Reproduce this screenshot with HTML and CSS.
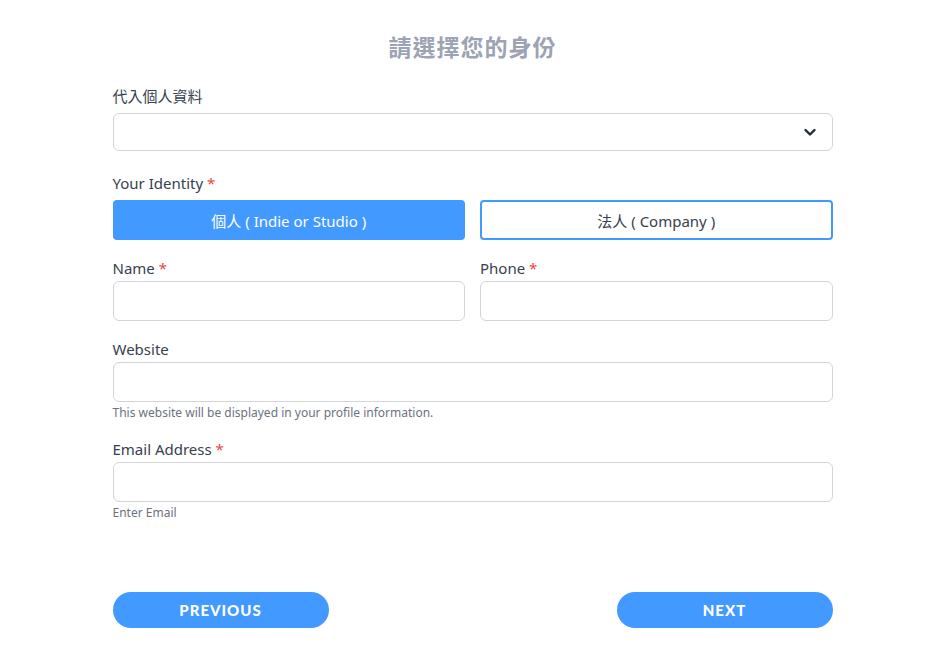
FILE: index.html
```html
<!DOCTYPE html>
<html lang="zh-Hant">
<head>
    <meta charset="UTF-8">
    <meta name="viewport" content="width=device-width, initial-scale=1.0">
    <title>請選擇您的身份</title>
    <link rel="stylesheet" href="styles.css">
</head>
<body>
    <div class="wizard">
        <h1 class="title">請選擇您的身份</h1>

        <label class="label label-select" for="profile">代入個人資料</label>
        <div class="select-wrap">
            <select id="profile" class="field select"></select>
            <svg class="chevron" width="14" height="14" viewBox="0 0 14 14">
                <path d="M2.5 5 L7 9.5 L11.5 5" fill="none" stroke="#1f2937" stroke-width="2.4" stroke-linecap="round" stroke-linejoin="round"/>
            </svg>
        </div>

        <div class="label label-select identity-label">Your Identity <span class="req">*</span></div>
        <div class="row">
            <button class="choice active">個人 ( Indie or Studio )</button>
            <button class="choice">法人 ( Company )</button>
        </div>

        <div class="row fields">
            <div class="col">
                <label class="label" for="name">Name <span class="req">*</span></label>
                <input id="name" class="field" type="text">
            </div>
            <div class="col">
                <label class="label" for="phone">Phone <span class="req">*</span></label>
                <input id="phone" class="field" type="text">
            </div>
        </div>

        <div class="group">
            <label class="label" for="website">Website</label>
            <input id="website" class="field" type="text">
            <div class="help">This website will be displayed in your profile information.</div>
        </div>

        <div class="group email">
            <label class="label" for="email">Email Address <span class="req">*</span></label>
            <input id="email" class="field" type="text">
            <div class="help">Enter Email</div>
        </div>

        <div class="actions">
            <button class="nav">PREVIOUS</button>
            <button class="nav">NEXT</button>
        </div>
    </div>
</body>
</html>
```

FILE: styles.css
```css
body {
    margin: 0;
    background: #ffffff;
    font-family: "Segoe UI", "Noto Sans", "Noto Sans CJK TC", sans-serif;
    color: #374151;
}
.wizard {
    width: 720px;
    margin: 0 auto;
    padding-top: 31px;
}
.title {
    margin: 0;
    text-align: center;
    font-size: 23px;
    line-height: 32px;
    font-weight: bold;
    color: #9ca3b4;
    letter-spacing: 1px;
}
.label {
    display: block;
    font-size: 15px;
    line-height: 20px;
    color: #374151;
    margin-bottom: 3px;
}
.label-select {
    margin-bottom: 6px;
}
.title + .label {
    margin-top: 23px;
}
.label-select + .select-wrap {
    margin-top: 7px;
}
.title + .label.label-select {
    margin-bottom: 0;
}
.identity-label {
    margin-top: 22px;
    margin-bottom: 7px;
}
.req {
    color: #ef4444;
}
.field {
    display: block;
    box-sizing: border-box;
    width: 100%;
    height: 40px;
    border: 1px solid #d1d5db;
    border-radius: 6px;
    background: #fff;
    font: inherit;
    outline: none;
}
.select-wrap {
    position: relative;
}
.select {
    height: 38px;
    appearance: none;
    -webkit-appearance: none;
}
.chevron {
    position: absolute;
    right: 16px;
    top: 12px;
}
.row {
    display: flex;
    gap: 15px;
}
.choice {
    flex: 1;
    height: 40px;
    border: 2px solid #4299ff;
    border-radius: 4px;
    background: #fff;
    color: #374151;
    font-family: inherit;
    font-size: 15px;
}
.choice.active {
    background: #4299ff;
    color: #fff;
}
.fields {
    margin-top: 18px;
}
.col {
    flex: 1;
}
.group {
    margin-top: 18px;
}
.help {
    font-size: 12px;
    line-height: 16px;
    margin-top: 3px;
    color: #6b7280;
}
.email {
    margin-top: 18px;
}
.actions {
    display: flex;
    justify-content: space-between;
    margin-top: 71px;
}
.nav {
    width: 216px;
    height: 36px;
    border: none;
    border-radius: 18px;
    background: #4299ff;
    color: #fff;
    font-family: "Lato", "Noto Sans", sans-serif;
    font-weight: 900;
    font-size: 15px;
    letter-spacing: 1px;
}
```
